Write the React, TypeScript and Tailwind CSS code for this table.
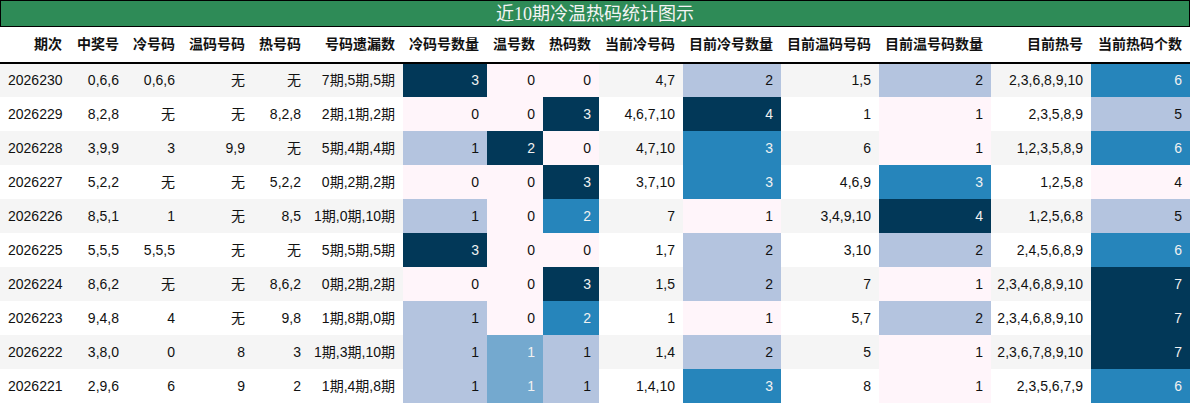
const COLS = [70, 57, 56, 70, 56, 94, 84, 56, 56, 84, 98, 98, 112, 100, 99];

const HEAD = [
  "期次", "中奖号", "冷号码", "温码号码", "热号码", "号码遗漏数", "冷码号数量", "温号数",
  "热码数", "当前冷号码", "目前冷号数量", "目前温码号码", "目前温号码数量", "目前热号", "当前热码个数",
];

// heat levels: p = pink, l = light, m = mid, b = blue, d = dark
type Lv = "p" | "l" | "m" | "b" | "d";
const HEAT: Record<Lv, string> = {
  p: "bg-[#fff5fa] text-[#111]",
  l: "bg-[#b4c4df] text-[#111]",
  m: "bg-[#74a9cf] text-[#f1f1f1]",
  b: "bg-[#2685bb] text-[#f1f1f1]",
  d: "bg-[#023858] text-[#f1f1f1]",
};

type Row = [string, string, string, string, string, string, string, Lv, string, Lv, string, Lv, string, string, Lv, string, string, Lv, string, string, Lv];

const ROWS: Row[] = [
  ["2026230", "0,6,6", "0,6,6", "无", "无", "7期,5期,5期", "3", "d", "0", "p", "0", "p", "4,7", "2", "l", "1,5", "2", "l", "2,3,6,8,9,10", "6", "b"],
  ["2026229", "8,2,8", "无", "无", "8,2,8", "2期,1期,2期", "0", "p", "0", "p", "3", "d", "4,6,7,10", "4", "d", "1", "1", "p", "2,3,5,8,9", "5", "l"],
  ["2026228", "3,9,9", "3", "9,9", "无", "5期,4期,4期", "1", "l", "2", "d", "0", "p", "4,7,10", "3", "b", "6", "1", "p", "1,2,3,5,8,9", "6", "b"],
  ["2026227", "5,2,2", "无", "无", "5,2,2", "0期,2期,2期", "0", "p", "0", "p", "3", "d", "3,7,10", "3", "b", "4,6,9", "3", "b", "1,2,5,8", "4", "p"],
  ["2026226", "8,5,1", "1", "无", "8,5", "1期,0期,10期", "1", "l", "0", "p", "2", "b", "7", "1", "p", "3,4,9,10", "4", "d", "1,2,5,6,8", "5", "l"],
  ["2026225", "5,5,5", "5,5,5", "无", "无", "5期,5期,5期", "3", "d", "0", "p", "0", "p", "1,7", "2", "l", "3,10", "2", "l", "2,4,5,6,8,9", "6", "b"],
  ["2026224", "8,6,2", "无", "无", "8,6,2", "0期,2期,2期", "0", "p", "0", "p", "3", "d", "1,5", "2", "l", "7", "1", "p", "2,3,4,6,8,9,10", "7", "d"],
  ["2026223", "9,4,8", "4", "无", "9,8", "1期,8期,0期", "1", "l", "0", "p", "2", "b", "1", "1", "p", "5,7", "2", "l", "2,3,4,6,8,9,10", "7", "d"],
  ["2026222", "3,8,0", "0", "8", "3", "1期,3期,10期", "1", "l", "1", "m", "1", "l", "1,4", "2", "l", "5", "1", "p", "2,3,6,7,8,9,10", "7", "d"],
  ["2026221", "2,9,6", "6", "9", "2", "1期,4期,8期", "1", "l", "1", "m", "1", "l", "1,4,10", "3", "b", "8", "1", "p", "2,3,5,6,7,9", "6", "b"],
];

type Cell = { text: string; lv?: Lv };

function toCells(r: Row): Cell[] {
  return [
    { text: r[0] }, { text: r[1] }, { text: r[2] }, { text: r[3] }, { text: r[4] }, { text: r[5] },
    { text: r[6], lv: r[7] },
    { text: r[8], lv: r[9] },
    { text: r[10], lv: r[11] },
    { text: r[12] },
    { text: r[13], lv: r[14] },
    { text: r[15] },
    { text: r[16], lv: r[17] },
    { text: r[18] },
    { text: r[19], lv: r[20] },
  ];
}

export default function App() {
  return (
    <div
      className="w-[1190px] h-[405px] bg-white text-[#111] overflow-hidden"
      style={{ fontFamily: '"Liberation Sans", "Noto Sans CJK SC", sans-serif' }}
    >
      <div
        className="h-[27px] bg-[#2e8b57] border border-black flex items-center justify-center text-[18px] text-[#f4f4f4] leading-none"
        style={{ fontFamily: '"Liberation Serif", "Noto Sans CJK SC", serif' }}
      >
        近10期冷温热码统计图示
      </div>
      <table className="table-fixed border-collapse w-[1190px] text-[14px]">
        <colgroup>
          {COLS.map((w, i) => (
            <col key={i} style={{ width: w }} />
          ))}
        </colgroup>
        <thead>
          <tr className="h-[36px] border-b-2 border-black">
            {HEAD.map((h) => (
              <th key={h} className="p-0 pr-2 text-right font-bold whitespace-nowrap align-middle">
                {h}
              </th>
            ))}
          </tr>
        </thead>
        <tbody>
          {ROWS.map((r, ri) => (
            <tr key={r[0]} className={`h-[34px] ${ri % 2 === 0 ? "bg-[#f5f5f5]" : "bg-white"}`}>
              {toCells(r).map((c, ci) => (
                <td
                  key={ci}
                  className={`p-0 pr-2 text-right whitespace-nowrap align-middle ${c.lv ? HEAT[c.lv] : ""} ${ci === 0 ? "text-left pl-2" : ""}`}
                >
                  {c.text}
                </td>
              ))}
            </tr>
          ))}
        </tbody>
      </table>
    </div>
  );
}
